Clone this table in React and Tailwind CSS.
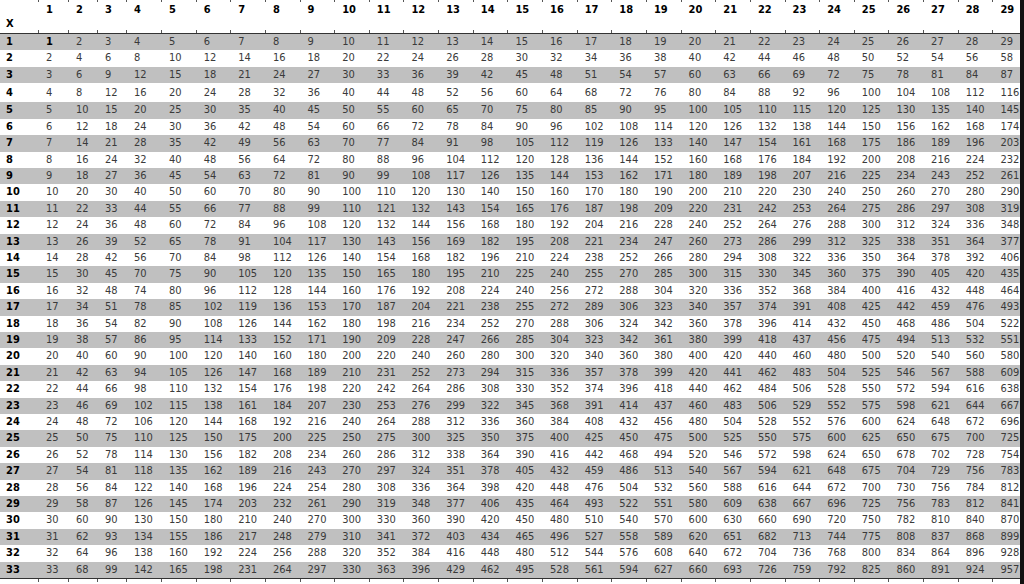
import React from 'react';

const GRID = 'grid grid-cols-[39px_30px_29px_29px_35px_repeat(25,34.65px)]';
const COLS = Array.from({ length: 29 }, (_, i) => i + 1);
const ROWS = Array.from({ length: 33 }, (_, i) => i + 1);

// the values as they appear in the sheet (a few cells are off)
const cellValue = (r, c) => {
  let v = r * c;
  if (c === 4 && r >= 15) v += 10;
  if (c === 26 && r >= 26) v += 2;
  if (c === 26 && r === 7) v += 4;
  if (c === 2 && r === 33) v += 2;
  if (r === 28 && c === 9) v += 2;
  if (r === 28 && c === 14) v += 6;
  return v;
};

const Ticks = ({ h }) => (
  <div className={`${GRID} ${h}`}>
    {[0, ...COLS].map((c) => (
      <div key={c} className="border-r border-[#555]" />
    ))}
  </div>
);

const App = () => {
  return (
    <div className="flex h-[584px] w-[1024px] overflow-hidden bg-white font-['DejaVu_Sans_Condensed','DejaVu_Sans',sans-serif] text-[11px]">
      <div className="w-[1020px] overflow-hidden">
        <div className="w-max">
          <Ticks h="h-[2px]" />

          {/* header */}
          <div className={`${GRID} h-[28px] font-bold text-black`}>
            <div className="flex flex-col pl-[6px]">
              <span className="h-[15px] leading-[15px]">&nbsp;</span>
              <span className="leading-[13px]">X</span>
            </div>
            {COLS.map((c) => (
              <div key={c} className="pl-[7px] leading-[15px]">
                {c}
              </div>
            ))}
          </div>

          <Ticks h="h-[3px]" />
          <div className="h-px bg-[#333]" />

          {/* body */}
          {ROWS.map((r) => (
            <div
              key={r}
              className={`${GRID} ${r === 4 ? 'h-[19.1px]' : 'h-[16.41px]'} ${r % 2 ? 'bg-[#c0c0c0]' : 'bg-white'}`}
            >
              <div className="flex items-center pl-[6px] font-bold text-black">{r}</div>
              {COLS.map((c) => (
                <div
                  key={c}
                  className={`flex items-center pl-[7px] ${r === 1 && c === 1 ? 'font-bold text-black' : 'text-[#3a3a3a]'}`}
                >
                  {cellValue(r, c)}
                </div>
              ))}
            </div>
          ))}

          <div className="h-px bg-[#333]" />
          <Ticks h="h-[3px]" />
        </div>
      </div>
      <div className="w-[4px] bg-[#111]" />
    </div>
  );
};

export default App;
